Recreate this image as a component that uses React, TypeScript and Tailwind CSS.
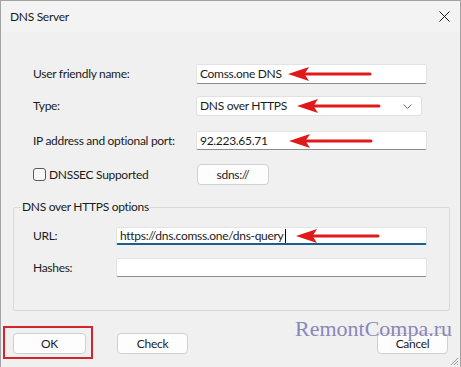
import React from 'react';

const font = { fontFamily: 'Lato, "Noto Sans", sans-serif' };

function Arrow({ gap }: { gap: string }) {
  return (
    <svg width="84" height="14" viewBox="0 0 84 14" className={`shrink-0 ${gap}`}>
      <path d="M0 7 L21 0 L16.5 7 L21 14 Z" fill="#e0191b" />
      <path d="M14 7 L82 7" stroke="#e0191b" strokeWidth="3" strokeLinecap="round" />
    </svg>
  );
}

function Field({ value, width, arrowGap, focused }: { value?: string; width: string; arrowGap?: string; focused?: boolean }) {
  return (
    <div
      className={`flex h-full items-center rounded-[2px] border border-[#e3e3e3] bg-white pl-[3px] text-[12px] text-[#1b1b1b] ${width} ${
        focused ? 'border-b-2 border-b-[#1c5e8f]' : 'border-b-[#8c8c8c]'
      }`}
    >
      <span className="whitespace-nowrap">{value}</span>
      {focused && <span className="ml-[1px] h-[14px] w-px shrink-0 bg-black" />}
      {arrowGap && <Arrow gap={arrowGap} />}
    </div>
  );
}

function Button({ label, className = '' }: { label: string; className?: string }) {
  return (
    <button
      type="button"
      className={`flex h-[21px] w-[71px] items-center justify-center rounded-[4px] border border-[#d0d0d0] bg-[#fdfdfd] text-[12px] text-[#1b1b1b] ${className}`}
    >
      {label}
    </button>
  );
}

export default function App() {
  return (
    <div style={font} className="relative flex h-[367px] w-[461px] flex-col overflow-hidden border-x border-t border-[#a3a3a3] bg-[#f0f0f0] text-[12px] tracking-[-0.3px] text-[#1b1b1b]">
      <div className="flex h-[31px] shrink-0 items-center justify-between bg-[#f3f3f3] pl-[9px] pr-[10px]">
        <span className="text-[12px]">DNS Server</span>
        <svg width="11" height="11" viewBox="0 0 11 11">
          <path d="M0.5 0.5 L10.5 10.5 M10.5 0.5 L0.5 10.5" stroke="#1b1b1b" strokeWidth="1" />
        </svg>
      </div>

      <div className="pl-[32px]">
        <div className="mt-[32px] flex h-[20px] items-center">
          <span className="w-[163px] whitespace-nowrap">User friendly name:</span>
          <Field value="Comss.one DNS" width="w-[231px]" arrowGap="ml-[6px]" />
        </div>
        <div className="mt-[12px] flex h-[20px] items-center">
          <span className="w-[163px]">Type:</span>
          <div className="flex h-full w-[226px] items-center justify-between rounded-[3px] border border-[#e0e0e0] bg-white pl-[3px] pr-[9px]">
            <div className="flex items-center">
              <span className="whitespace-nowrap">DNS over HTTPS</span>
              <Arrow gap="ml-[10px]" />
            </div>
            <svg width="9" height="5" viewBox="0 0 9 5">
              <path d="M0.5 0.5 L4.5 4.5 L8.5 0.5" fill="none" stroke="#6a6a6a" strokeWidth="1" />
            </svg>
          </div>
        </div>
        <div className="mt-[15px] flex h-[19px] items-center">
          <span className="w-[163px] whitespace-nowrap">IP address and optional port:</span>
          <Field value="92.223.65.71" width="w-[231px]" arrowGap="ml-[21px]" />
        </div>
        <div className="mt-[14px] flex h-[21px] items-center">
          <div className="flex w-[164px] items-center">
            <span className="h-[13px] w-[13px] rounded-[3px] border border-[#5a5a5a] bg-[#f7f7f7]" />
            <span className="ml-[3px] whitespace-nowrap">DNSSEC Supported</span>
          </div>
          <Button label="sdns://" className="w-[72px]" />
        </div>
      </div>

      <fieldset className="ml-[12px] mt-[13px] h-[113px] w-[437px] rounded-[2px] border border-[#d9d9d9] pl-[19px]">
        <legend className="ml-[-12px] px-[1px] text-[12px]">DNS over HTTPS options</legend>
        <div className="mt-[11px] flex h-[18px] items-center">
          <span className="w-[83px]">URL:</span>
          <Field value="https://dns.comss.one/dns-query" width="w-[311px]" arrowGap="ml-[10px]" focused />
        </div>
        <div className="mt-[13px] flex h-[19px] items-center">
          <span className="w-[83px]">Hashes:</span>
          <Field width="w-[311px]" />
        </div>
      </fieldset>

      <div className="mt-[15px] flex items-start pr-[12px]">
        <div className="ml-[2px] h-[33px] w-[90px] border-2 border-[#d2262c] pl-[8px] pt-[5px]">
          <Button label="OK" className="w-[73px] border-[#2f5f7f] bg-[#f6f9fb]" />
        </div>
        <Button label="Check" className="ml-[24px] mt-[7px]" />
        <Button label="Cancel" className="ml-auto mt-[7px]" />
      </div>

      <span
        className="pointer-events-none absolute left-[294px] top-[317px] text-[22px] leading-none tracking-normal text-[#7e7cb3] opacity-90"
        style={{ fontFamily: '"Liberation Serif", serif' }}
      >
        RemontCompa.ru
      </span>

      <svg width="9" height="9" viewBox="0 0 9 9" className="absolute bottom-[1px] right-[1px]">
        <path d="M8 1 L1 8 M8 4 L4 8 M8 7 L7 8" stroke="#9a9a9a" strokeWidth="1" />
      </svg>
    </div>
  );
}
